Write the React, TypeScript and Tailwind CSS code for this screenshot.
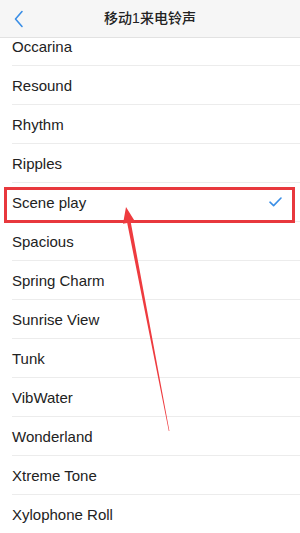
const tones = [
  'Occarina',
  'Resound',
  'Rhythm',
  'Ripples',
  'Scene play',
  'Spacious',
  'Spring Charm',
  'Sunrise View',
  'Tunk',
  'VibWater',
  'Wonderland',
  'Xtreme Tone',
  'Xylophone Roll',
];

function App() {
  const selected = 'Scene play';

  return (
    <div
      className="relative w-[300px] h-[533px] overflow-hidden bg-white"
      style={{ fontFamily: '"Liberation Sans", "Noto Sans CJK SC", sans-serif' }}
    >
      {/* Nav bar */}
      <div className="relative z-10 h-[38px] bg-[#f6f6f6] border-b border-[#e2e2e2] flex items-center justify-center">
        <svg className="absolute left-[13px] top-[10px]" width="12" height="18" viewBox="0 0 12 18">
          <path d="M9 1.5 L2.5 9 L9 16.5" fill="none" stroke="#3a8ee6" strokeWidth="1.6" strokeLinecap="round" strokeLinejoin="round" />
        </svg>
        <h1 className="text-[14px] font-medium text-[#222]">移动1来电铃声</h1>
      </div>

      {/* Ringtone list */}
      <div className="-mt-[11px]">
        {tones.map((name) => (
          <div key={name} className="h-[39px] pl-3 flex">
            <div className="flex-1 flex items-center justify-between pr-[18px] border-b border-[#ececec]">
              <span className="text-[15px] text-[#222] pt-[2px]">{name}</span>
              {name === selected && (
                <svg width="13" height="10" viewBox="0 0 13 10">
                  <path d="M1 5.2 L4.6 8.6 L12 1" fill="none" stroke="#3a8ee6" strokeWidth="1.6" strokeLinecap="round" strokeLinejoin="round" />
                </svg>
              )}
            </div>
          </div>
        ))}
      </div>

      {/* Annotation: highlight box */}
      <div className="absolute left-[4px] top-[187px] w-[291px] h-[36px] border-[3px] border-[#e8383d]" />

      {/* Annotation: arrow */}
      <svg className="absolute inset-0 pointer-events-none" width="300" height="533" viewBox="0 0 300 533">
        <polygon
          points="126,207 135,221.6 130.8,222.4 169.4,431 168.8,431 127.2,223 123,223.8"
          fill="#ee3b3f"
        />
      </svg>
    </div>
  );
}

export default App;
